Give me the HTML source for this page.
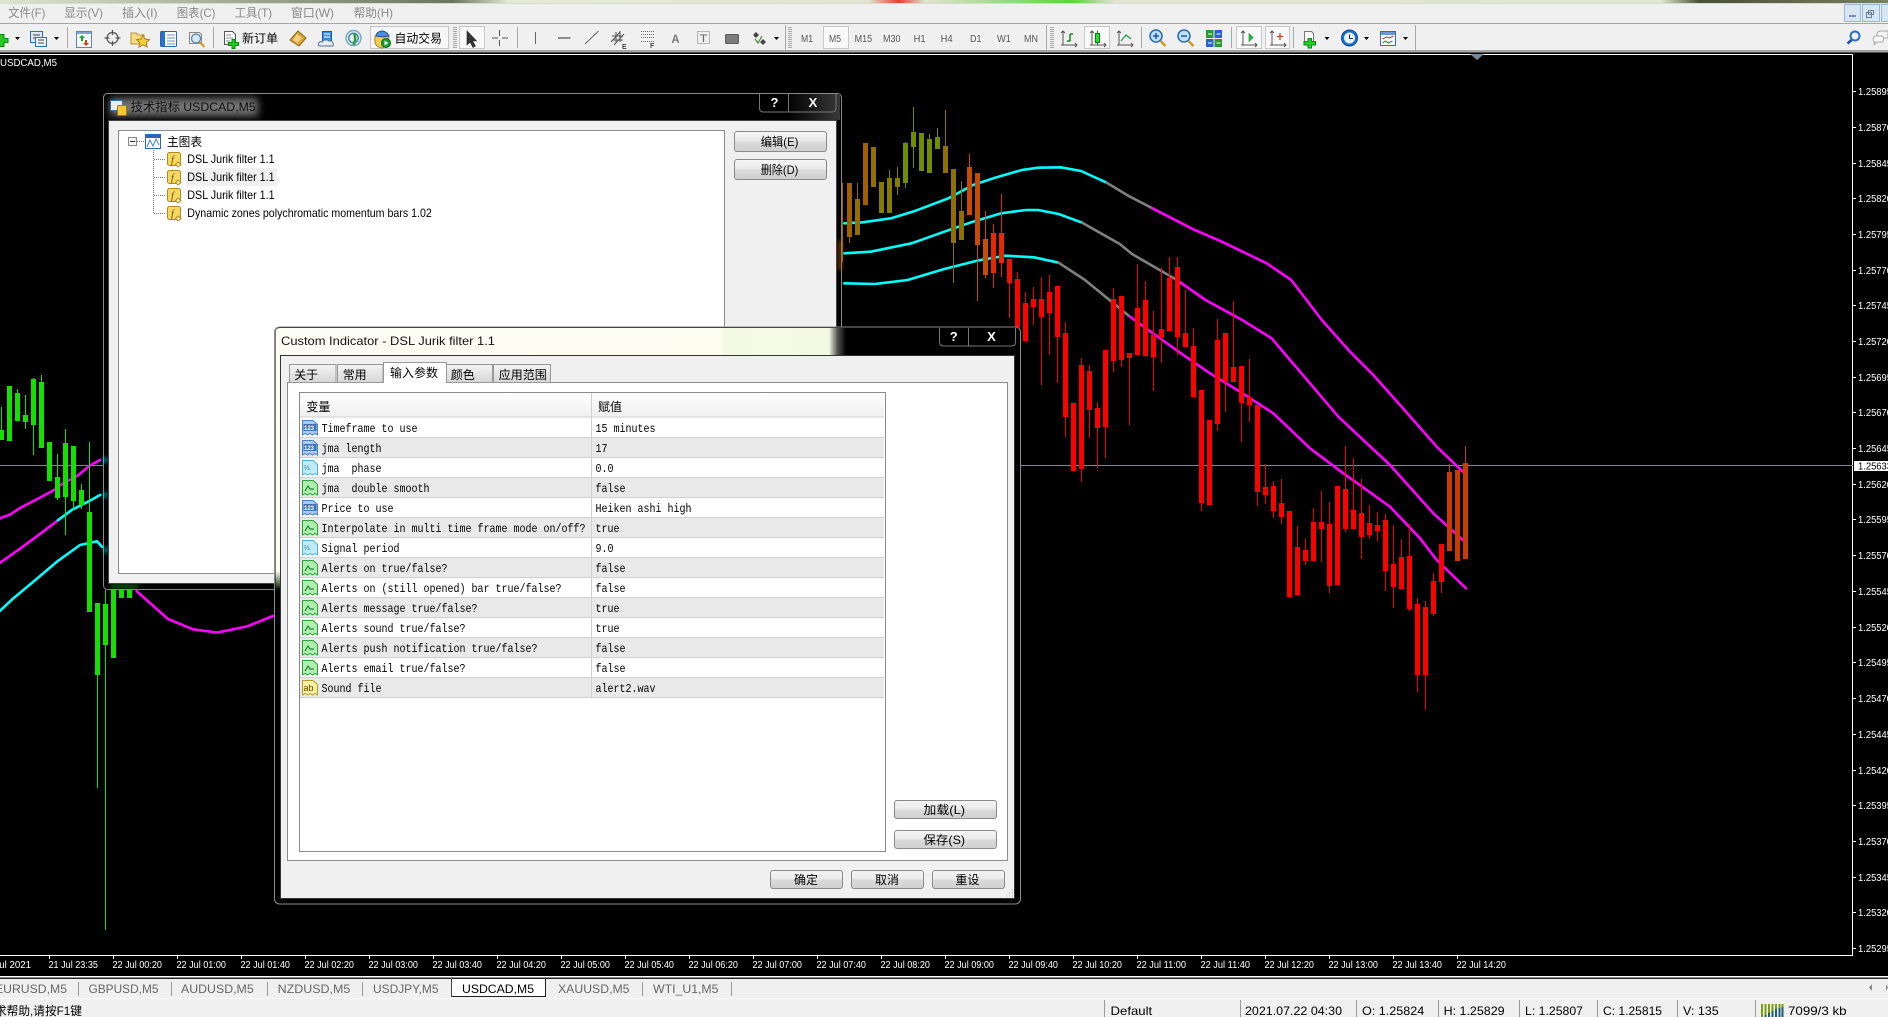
<!DOCTYPE html>
<html lang="zh"><head><meta charset="utf-8"><title>MT4 USDCAD,M5</title>
<style>
html,body{margin:0;padding:0;width:1888px;height:1017px;overflow:hidden;background:#f0f0f0}
svg{position:absolute;left:0;top:0;display:block}
text{font-family:"Liberation Sans","WenQuanYi Zen Hei","Noto Sans CJK SC",sans-serif;font-size:12px;white-space:pre}
.m{font-family:"Liberation Mono","WenQuanYi Zen Hei",monospace}
.w{fill:#fff;font-size:10px}
.tf{fill:#555;font-size:10px}
.g{fill:#888}
.t{fill:#666}
</style></head><body>
<svg width="1888" height="1017" viewBox="0 0 1888 1017" xmlns="http://www.w3.org/2000/svg">
<defs>
<linearGradient id="strip"><stop offset="0" stop-color="#dfe5d0"/><stop offset=".24" stop-color="#6a7460"/><stop offset=".27" stop-color="#e6ead8"/><stop offset=".46" stop-color="#e0e4d0"/><stop offset=".476" stop-color="#e84030"/><stop offset=".49" stop-color="#e0e4d0"/><stop offset=".568" stop-color="#60d040"/><stop offset=".59" stop-color="#e0e4d0"/><stop offset=".88" stop-color="#dfe5d0"/><stop offset=".9" stop-color="#4a4f38"/><stop offset="1" stop-color="#7a8060"/></linearGradient>
<linearGradient id="btn" x2="0" y2="1"><stop offset="0" stop-color="#f6f6f6"/><stop offset=".45" stop-color="#ebebeb"/><stop offset=".55" stop-color="#dadada"/><stop offset="1" stop-color="#cfcfcf"/></linearGradient>
<linearGradient id="tab" x2="0" y2="1"><stop offset="0" stop-color="#f4f4f4"/><stop offset="1" stop-color="#d6d6d6"/></linearGradient>
<linearGradient id="hdr" x2="0" y2="1"><stop offset="0" stop-color="#fff"/><stop offset="1" stop-color="#efefef"/></linearGradient>
<linearGradient id="t1"><stop offset="0" stop-color="#000"/><stop offset=".7" stop-color="#000"/><stop offset="1" stop-color="#383838"/></linearGradient>
<linearGradient id="t2" gradientUnits="userSpaceOnUse" x1="275" x2="846" y1="0" y2="0"><stop offset="0" stop-color="#fdfdf6"/><stop offset=".78" stop-color="#fdfdf0"/><stop offset=".785" stop-color="#f4f9e4"/><stop offset=".97" stop-color="#f4fae2"/><stop offset=".985" stop-color="#555"/><stop offset="1" stop-color="#000"/></linearGradient>
<linearGradient id="lf" x2="0" y2="1"><stop offset="0" stop-color="#fdfdf4"/><stop offset=".92" stop-color="#fafdf0"/><stop offset=".97" stop-color="#607050"/><stop offset="1" stop-color="#000"/></linearGradient>
<filter id="b4" x="-30%" y="-60%" width="160%" height="220%"><feGaussianBlur stdDeviation="4"/></filter>
<filter id="b2" x="-100%" y="-100%" width="300%" height="300%"><feGaussianBlur stdDeviation="2"/></filter>
<path id="tear" d="M.5 .5H11L15.5 4.5V15L13 13.5 10.5 15 8 13.5 5.5 15 3 13.5 .5 15Z"/>
<g id="ib"><use href="#tear" fill="#a9cdf2" stroke="#4a80c0"/><rect x="1.5" y="4" width="13" height="7" fill="#3f74b4"/></g>
<g id="il"><use href="#tear" fill="#bfeaf8" stroke="#4fb0d2"/></g>
<g id="ig"><use href="#tear" fill="#aef0ae" stroke="#2f9f3a"/><path d="M3 11L6 6 8 9 12 9" fill="none" stroke="#0f6a1f" stroke-width="1"/></g>
<g id="iy"><use href="#tear" fill="#f8f0a0" stroke="#b0a030"/></g>
<g id="fi"><rect x=".5" y=".5" width="13" height="13" rx="2" fill="#f6d860" stroke="#b08a28"/><path d="M11 10l3 2.5-3 2.5-2.5-2.5z" fill="#f8e8a0" stroke="#b08a28"/></g>
<g id="ax"><path d="M2 0V14H16M0 2L2 0 4 2M14 12L16 14 14 16M0 14H4" fill="none" stroke="#555" stroke-width="1"/></g>
<path id="dd" d="M0 0h5l-2.5 3z" fill="#000"/>
</defs>

<!-- window background -->
<rect width="1888" height="1017" fill="#f0f0f0"/>
<rect width="1888" height="3" fill="url(#strip)"/>
<rect y="3" width="1888" height="1" fill="#d8dcc8"/>

<!-- menu -->
<text class="g" x="8" y="17" textLength="37.4" lengthAdjust="spacingAndGlyphs">文件(F)</text>
<text class="g" x="64.3" y="17" textLength="38.7" lengthAdjust="spacingAndGlyphs">显示(V)</text>
<text class="g" x="122" y="17" textLength="35.5" lengthAdjust="spacingAndGlyphs">插入(I)</text>
<text class="g" x="176.8" y="17" textLength="38.6" lengthAdjust="spacingAndGlyphs">图表(C)</text>
<text class="g" x="234.6" y="17" textLength="37.4" lengthAdjust="spacingAndGlyphs">工具(T)</text>
<text class="g" x="291" y="17" textLength="43" lengthAdjust="spacingAndGlyphs">窗口(W)</text>
<text class="g" x="353.6" y="17" textLength="39.4" lengthAdjust="spacingAndGlyphs">帮助(H)</text>
<g fill="#d8e6f3" stroke="#9db8d4"><rect x="1844.5" y="4.5" width="16" height="17"/><rect x="1862.5" y="4.5" width="17" height="17"/><rect x="1881.5" y="4.5" width="10" height="17"/></g>
<rect x="1849" y="15" width="7" height="2" fill="#7a8ea4"/>
<path d="M1868.5 14.5v-4h5v4h-5M1866.5 12.5h5v5h-5z" fill="none" stroke="#6a7e94"/>
<rect y="23" width="1888" height="1" fill="#a6a6a6"/>

<!-- toolbar -->
<g stroke="#a8a8a8" fill="none"><path d="M67.5 27V48M213.5 27V48M517.5 27V48M785.5 25V50M1046.5 25V50M1141.5 27V48M1231.5 27V48M1293.5 27V48M1415.5 25V50"/></g>
<g stroke="#a8a8a8" stroke-width="4" stroke-dasharray="1 1"><path d="M455 27V48M790 27V48M1052 27V48"/></g>
<path d="M-1 34.5h5v4h4v4h-4v4h-5z" fill="#22cc22" stroke="#0a8a0a"/>
<use href="#dd" x="15" y="37"/>
<rect x="30.5" y="31.5" width="12" height="11" fill="#dfeaf8" stroke="#2a6fb8"/><rect x="35.5" y="37.5" width="11" height="9" fill="#eef4fc" stroke="#2a6fb8"/><path d="M33 35h7M33 38h2M38 40h6M38 43h6" stroke="#444"/>
<use href="#dd" x="54" y="37"/>
<rect x="76.5" y="31.5" width="15" height="16" fill="#f8fbff" stroke="#5a86b5"/><rect x="77" y="32" width="14" height="2" fill="#7fa6d0"/><path d="M82 35l3 3h-2v3h-2v-3h-2z" fill="#12b012"/><path d="M86 46l-3-3h2v-3h2v3h2z" fill="#e03a10"/>
<circle cx="112.5" cy="38" r="5.5" fill="none" stroke="#666" stroke-width="1.4"/><path d="M112.5 30v5M112.5 41v5M104.5 38h5M115.5 38h5" stroke="#555" stroke-width="1.2"/>
<path d="M131 33h5l2 2h6v9h-13z" fill="#f8dc80" stroke="#b89030"/><path d="M143 35l2 4 4.5.6-3.2 3 .8 4.4-4.1-2.2-4 2.2.8-4.4-3.2-3 4.500-.6z" fill="#f4d040" stroke="#a88020"/>
<rect x="160.5" y="31.500" width="16" height="15" rx="1" fill="#fff" stroke="#2a66b0"/><rect x="161" y="32" width="4" height="14" fill="#2a70c8"/><path d="M167 35h8M167 38h8M167 41h8M167 44h8" stroke="#6a90c0"/>
<path d="M189.500 32.500h10l2 2v9h-12z" fill="#f0f0f0" stroke="#888"/><circle cx="196" cy="38.500" r="4.500" fill="#cfe8fa" stroke="#5a7ea0" stroke-width="1.200"/><path d="M199.500 42l5 5" stroke="#d09a20" stroke-width="2"/>
<path d="M224.500 31.500h8l3 3v10h-11z" fill="#fff" stroke="#555"/><path d="M226 35h5M226 38h7M226 41h4" stroke="#888"/><path d="M232 39.500h3v3h3.500v3h-3.500v3h-3v-3h-3.500v-3h3.500z" fill="#22cc22" stroke="#0a8a0a"/>
<text x="242" y="42.500" textLength="36" lengthAdjust="spacingAndGlyphs" fill="#000">新订单</text>
<path d="M298 31l8 7-7 8-9-6z" fill="#d8a838" stroke="#8a6410"/><path d="M297 34l5 4-5 5-4-3z" fill="#f0d080"/>
<rect x="322.500" y="31.500" width="9" height="10" fill="#3a90e0" stroke="#1a5aa0"/><path d="M324 34h6M324 37h6" stroke="#fff"/><path d="M319 46c-2-3 1-5 3-4 1-2 5-3 7-1 3-1 5 2 4 5z" fill="#e6ecf2" stroke="#56708c"/>
<circle cx="353.500" cy="38" r="7.500" fill="none" stroke="#7aa8c0" stroke-width="1.500"/><circle cx="353.500" cy="38" r="4.800" fill="none" stroke="#3e8aa8" stroke-width="1.500"/><path d="M353.500 34c2 1 2.500 5 0 11" fill="none" stroke="#27a040" stroke-width="2.500"/>
<rect x="370.500" y="26.500" width="78" height="22" fill="#f7f7f7" stroke="#c6c6c6"/>
<path d="M375 36h14l-1 7c-1 3-5 5-6 5-2 0-6-2-7-5z" fill="#f0cc50" stroke="#a08020"/><path d="M376 36c0-3 3-5 6-5s6 2 7 5c-4 1-9 1-13 0z" fill="#4a8ed0" stroke="#2a5a90"/><circle cx="386" cy="43" r="4.500" fill="#12a030" stroke="#0a6a20"/><path d="M384.500 40.500l4 2.500-4 2.500z" fill="#fff"/>
<text x="394.500" y="42.500" textLength="47.500" lengthAdjust="spacingAndGlyphs" fill="#000">自动交易</text>
<rect x="459.500" y="26.500" width="25" height="22" fill="#f9f9f9" stroke="#c8c8c8"/>
<path d="M467 31V45L470 42 473 47.500 475.500 46 472.500 41H476.500Z" fill="#333" stroke="#222" stroke-width=".6"/>
<path d="M499.500 30v6M499.500 40v6M492 38h6M502 38h6" stroke="#555"/>
<path d="M535.500 32V44" stroke="#666"/><path d="M558 38h12.500" stroke="#555" stroke-width="1.300"/><path d="M585 44l13.500-13" stroke="#666"/>
<path d="M611 42l9-10M614 45l10-11M616 32v11M620 31v11M612 36l11 0M612 40l11 0" stroke="#555" fill="none"/><text x="622" y="49" style="font-size:7px;font-weight:bold" fill="#444">E</text>
<path d="M641 31.500h13M641 34.500h13M641 37.500h13M641 41.500h13" stroke="#666" stroke-dasharray="1 1"/><text x="650" y="48" style="font-size:7px;font-weight:bold" fill="#444">F</text>
<text x="671.500" y="43" textLength="8" lengthAdjust="spacingAndGlyphs" style="font-size:12px;font-weight:bold" fill="#777">A</text>
<rect x="697.500" y="31.500" width="12" height="12" fill="none" stroke="#777" stroke-dasharray="1 1"/><text x="699.500" y="42" textLength="8" lengthAdjust="spacingAndGlyphs" style="font-size:11px" fill="#666">T</text>
<rect x="725.500" y="34.500" width="13" height="9" rx="1" fill="#7c7c7c" stroke="#5a5a5a"/>
<path d="M756 32l3 3-3 3-3-3zM763 39l3 3-3 3-3-3z" fill="#444"/><path d="M755 39l3 4 4-7" fill="none" stroke="#4a8a3a" stroke-width="1.200"/>
<use href="#dd" x="774" y="37"/>
<text class="tf" x="801" y="42" textLength="12" lengthAdjust="spacingAndGlyphs">M1</text>
<rect x="823.500" y="26.500" width="25" height="22" fill="#f9f9f9" stroke="#c8c8c8"/>
<text class="tf" x="829" y="42" textLength="12" lengthAdjust="spacingAndGlyphs">M5</text>
<text class="tf" x="854.600" y="42" textLength="17.500" lengthAdjust="spacingAndGlyphs">M15</text>
<text class="tf" x="883" y="42" textLength="17.500" lengthAdjust="spacingAndGlyphs">M30</text>
<text class="tf" x="913.600" y="42" textLength="12" lengthAdjust="spacingAndGlyphs">H1</text>
<text class="tf" x="940.600" y="42" textLength="12" lengthAdjust="spacingAndGlyphs">H4</text>
<text class="tf" x="970" y="42" textLength="11.500" lengthAdjust="spacingAndGlyphs">D1</text>
<text class="tf" x="997" y="42" textLength="14" lengthAdjust="spacingAndGlyphs">W1</text>
<text class="tf" x="1024" y="42" textLength="14" lengthAdjust="spacingAndGlyphs">MN</text>
<use href="#ax" x="1061" y="31"/><path d="M1070 41V34M1070 34h3M1067 41h3" stroke="#0a8a20" stroke-width="1.500" fill="none"/>
<rect x="1084.500" y="26.500" width="25" height="22" fill="#f9f9f9" stroke="#c8c8c8"/>
<use href="#ax" x="1090" y="31"/><rect x="1095.500" y="33.500" width="4" height="9" fill="#22e022" stroke="#0a7a20"/><path d="M1097.500 30.500v3M1097.500 42.500v2" stroke="#0a7a20"/>
<use href="#ax" x="1117" y="31"/><path d="M1121 41l5-6 5 4" fill="none" stroke="#1a9a50" stroke-width="1.200"/>
<circle cx="1156" cy="36" r="6" fill="#bfe0f6" stroke="#2a6ab0" stroke-width="1.500"/><path d="M1153 36h6M1156 33v6" stroke="#1a5aa8" stroke-width="1.500"/><path d="M1160.500 41l5 5" stroke="#d09a20" stroke-width="2.500"/>
<circle cx="1184" cy="36" r="6" fill="#bfe0f6" stroke="#2a6ab0" stroke-width="1.500"/><path d="M1181 36h6" stroke="#1a5aa8" stroke-width="1.500"/><path d="M1188.500 41l5 5" stroke="#d09a20" stroke-width="2.500"/>
<rect x="1206" y="30" width="7.500" height="8" fill="#2a9a30"/><rect x="1214.500" y="30" width="7.500" height="8" fill="#2a60d0"/><rect x="1206" y="39" width="7.500" height="8" fill="#2a60d0"/><rect x="1214.500" y="39" width="7.500" height="8" fill="#2a9a30"/><path d="M1208 34h4M1216.500 34h4M1208 43h4M1216.500 43h4" stroke="#fff"/>
<rect x="1236.500" y="26.500" width="25" height="22" fill="#f9f9f9" stroke="#c8c8c8"/>
<use href="#ax" x="1241" y="31"/><path d="M1249 33.500l4 4-4 4z" fill="#22c03a" stroke="#0a8a2a" stroke-width=".6"/>
<rect x="1265.500" y="26.500" width="24" height="22" fill="#f9f9f9" stroke="#c8c8c8"/>
<use href="#ax" x="1270" y="31"/><path d="M1280 33v7M1277 36.500h6" stroke="#d03a10" stroke-width="1.200"/>
<path d="M1304.500 31.500h7l2 2v9h-9z" fill="#fff" stroke="#777"/><path d="M1308 38.500h3.500v3h4v3.500h-4v3h-3.500v-3h-4v-3.500h4z" fill="#22d022" stroke="#0a8a1a"/>
<use href="#dd" x="1324.500" y="37"/>
<circle cx="1349.500" cy="38" r="8" fill="#1a70c8" stroke="#0a4a90"/><circle cx="1349.500" cy="38" r="5.500" fill="#e8f2fa"/><path d="M1349.500 34.500V38.500H1353" stroke="#333" fill="none"/>
<use href="#dd" x="1364" y="37"/>
<rect x="1380.500" y="31.500" width="15" height="14" fill="#fff" stroke="#3a6ea8"/><rect x="1381" y="32" width="14" height="3" fill="#6a9ad0"/><path d="M1382.500 39l4-2 3 1 4-2" stroke="#c03a10" fill="none"/><path d="M1382.500 43l3-2 3 2 4-2" stroke="#1a8a30" fill="none"/>
<use href="#dd" x="1403" y="37"/>
<circle cx="1855" cy="36" r="4.500" fill="none" stroke="#2a6ec0" stroke-width="2"/><path d="M1851.500 40l-4 3.500" stroke="#1a50a0" stroke-width="2.500"/>
<path d="M1880 31h8v7h-6l-3 3v-3c-3-1-3-6 1-7z" fill="#f4f4f4" stroke="#aaa"/><path d="M1876 36c-3 0-4 5-1 6l-1 3 3-3h5c2-1 2-5 0-6z" fill="#fafafa" stroke="#aaa"/>
<rect y="50" width="1888" height="2.500" fill="#a4a4a4"/>

<!-- chart -->
<rect y="52.500" width="1888" height="923.500" fill="#000"/>
<path d="M0 54.500H1852.500V955.500H0" fill="none" stroke="#fff"/>
<path d="M1470 54h14l-7 6z" fill="#778899"/>
<text class="w" x="0" y="66" textLength="57" lengthAdjust="spacingAndGlyphs">USDCAD,M5</text>
<path d="M0 465.500H1853" stroke="#778899"/>

<!-- indicator lines -->
<g fill="none" stroke-width="2.600" stroke-linejoin="round" stroke-linecap="round">
<path stroke="#f0f" d="M0 518.300L10 514.600 20 508 40 497.600 55 489.500 62 484 78 475.400 90 465.400 100 460"/>
<path stroke="#f0f" d="M0 562.700L20 548.700 40 533.900 58 520.200"/>
<path stroke="#0ff" d="M58 520.200L72 509.800 90 500.600 100 495"/>
<path stroke="#0ff" d="M0 610.800L13 598.600 33 582 57 561.600 80 545 97 541.300 102 546.800"/>
<path stroke="#f0f" d="M136.700 591.200L168 619 193 629.300 217 632.600 247 626.400 273 616"/>
<path stroke="#0ff" d="M844.300 223.300L862.700 222.300 891.200 218.300 915.700 210.700 948.400 198.300 972.900 185 993.300 178.300 1021.800 170 1038.200 167.700 1060.600 167.300 1081 171 1106.700 182.700"/>
<path stroke="#808080" d="M1106.700 182.700L1130 196.700 1152.400 208.300"/>
<path stroke="#f0f" d="M1152.400 208.300L1193.300 229.300 1221.800 241.700 1266.700 263.300 1291.200 280 1321.800 320 1350 351.700 1373.300 375 1400 405 1436.700 446.700 1462.700 471.700"/>
<path stroke="#0ff" d="M844.300 253.300L870.800 251.700 911.600 243.300 944.300 231.700 972.900 221.700 1001.400 213.300 1025.900 210 1038.200 210 1058.600 214 1082.200 222.700"/>
<path stroke="#808080" d="M1082.200 222.700L1119.800 244 1132 254 1176.900 280"/>
<path stroke="#f0f" d="M1176.900 280L1205.500 300 1242.200 320 1271.700 338.300 1290 360 1310 383.300 1338.300 416.700 1390 465 1433.300 513.300 1462.700 540"/>
<path stroke="#0ff" d="M844.300 283.300L874.900 284 907.600 280 944.300 269 976.900 260.700 1005.500 255.700 1034 257.300 1058.600 262.700"/>
<path stroke="#808080" d="M1058.600 262.700L1085 280 1111.600 301.700 1130 316.700"/>
<path stroke="#f0f" d="M1130 316.700L1148.300 330 1180 352.700 1210 373.300 1240 391.700 1273.300 413.300 1310 448.300 1343.300 473.300 1390 506.700 1420 538.300 1436.700 560 1466 588.300"/>
</g>

<!-- candles: wicks then bodies -->
<g fill="none">
<path stroke="#14e000" d="M1.500 407V440M17.500 389V421M25.500 395V429M33.500 378V455M41.500 375V448M57.500 454V500M65.500 429V535M73.500 446V510M81.500 484V509M89.500 442V612M97.500 603V788M105.500 590V930"/>
<path stroke="#14e000" stroke-width="5" d="M1.500 430V440M9.500 386V441M17.500 393V421M25.500 415V422M33.500 379V425M41.500 382V448M49.500 442V481M57.500 477V498M65.500 443V497M73.500 446V501M81.500 490V505M89.500 512V612M97.500 603V675M105.500 604V645M113.500 585V658M121.500 585V598M129.500 585V598"/>
<path stroke="#708c00" d="M905.500 142V188M913.500 107V168M929.500 134V173M937.500 128V149"/>
<path stroke="#708c00" stroke-width="5" d="M905.500 143V183M913.500 132V147M921.500 133V171M929.500 139V173M937.500 137V149"/>
<path stroke="#857c00" d="M889.500 170V213M897.500 167V195"/>
<path stroke="#857c00" stroke-width="5" d="M881.500 182V213M889.500 178V213M897.500 178V187"/>
<path stroke="#907000" d="M857.500 183V235M945.500 110V173M953.500 169V283M961.500 181V240"/>
<path stroke="#907000" stroke-width="5" d="M857.500 199V235M873.500 147V187M945.500 146V173M953.500 169V243M961.500 211V240"/>
<path stroke="#a06000" d="M849.500 183V243M842.500 183V262"/>
<path stroke="#a06000" stroke-width="5" d="M849.500 183V237M865.500 143V205"/>
<path stroke="#c84c00" d="M969.500 154V215M977.500 173V301M985.500 211V278"/>
<path stroke="#c84c00" stroke-width="5" d="M969.500 167V215M977.500 173V245M985.500 239V275"/>
<path stroke="#e82800" d="M993.500 224V288M1001.500 194V277"/>
<path stroke="#e82800" stroke-width="5" d="M993.500 233V273M1001.500 233V263"/>
<path stroke="#f01000" d="M1009.500 259V318"/><path stroke="#f01000" stroke-width="5" d="M1009.500 259V283"/>
<path stroke="#f00000" d="M1017.500 272V327M1025.500 292V341M1033.500 287V325M1041.500 277V385M1049.500 275V355M1057.500 286V383M1065.500 322V437M1081.500 358V482M1089.500 365V438M1097.500 402V468M1105.500 350V458M1113.500 288V372M1121.500 296V367M1129.500 353V425M1137.500 264V355M1145.500 281V357M1153.500 311V391M1161.500 268V363M1169.500 257V331M1177.500 257V355M1185.500 290V347M1193.500 328V396M1201.500 390V511M1217.500 319V431M1225.500 333V412M1233.500 301V382M1241.500 366V442M1249.500 359V422M1257.500 405V506M1265.500 464V504M1273.500 481V518M1281.500 479V524M1297.500 526V595M1305.500 539V565M1313.500 508V561M1321.500 491V562M1329.500 502V593M1345.500 446V532M1353.500 458V529M1361.500 479V559M1369.500 505V539M1377.500 512V541M1385.500 514V591M1393.500 525V608M1401.500 539V589M1409.500 524V611M1417.500 598V692M1425.500 601V710M1433.500 573V616M1441.500 544V593"/>
<path stroke="#fe0000" stroke-width="5" d="M1017.500 279V327M1025.500 303V341M1033.500 299V307M1041.500 299V317M1049.500 292V313M1057.500 286V337M1065.500 333V417M1073.500 403V471M1081.500 365V469M1089.500 371V410M1097.500 408V428M1105.500 350V427M1113.500 299V361M1121.500 296V360M1129.500 353V358M1137.500 308V355M1145.500 300V356M1153.500 335V357M1161.500 329V338M1169.500 278V331M1177.500 267V337M1185.500 333V347M1193.500 346V397M1201.500 390V503M1209.500 420V505M1217.500 340V424M1225.500 333V381M1233.500 367V382M1241.500 366V403M1249.500 397V405M1257.500 405V492M1265.500 487V495M1273.500 486V511M1281.500 503V517M1289.500 511V597M1297.500 547V595M1305.500 550V561M1313.500 522V561M1321.500 522V529M1329.500 524V586M1337.500 486V585M1345.500 489V529M1353.500 510V529M1361.500 513V537M1369.500 523V535M1377.500 525V531M1385.500 520V571M1393.500 564V587M1401.500 557V589M1409.500 556V609M1417.500 604V675M1425.500 607V675M1433.500 581V614M1441.500 544V582"/>
<path stroke="#c83c00" d="M1449.500 464V551M1465.500 446V559"/>
<path stroke="#c83c00" stroke-width="5" d="M1449.500 472V551M1457.500 470V561M1465.500 463V559"/>
</g>

<!-- price axis -->
<g stroke="#fff"><path d="M1853 91.500h3M1853 127.500h3M1853 163.500h3M1853 198.500h3M1853 234.500h3M1853 270.500h3M1853 305.500h3M1853 341.500h3M1853 377.500h3M1853 412.500h3M1853 448.500h3M1853 484.500h3M1853 519.500h3M1853 555.500h3M1853 591.500h3M1853 627.500h3M1853 662.500h3M1853 698.500h3M1853 734.500h3M1853 770.500h3M1853 805.500h3M1853 841.500h3M1853 877.500h3M1853 912.500h3M1853 948.500h3"/></g>
<text class="w" x="1858" y="95" textLength="34" lengthAdjust="spacingAndGlyphs">1.25895</text>
<text class="w" x="1858" y="131" textLength="34" lengthAdjust="spacingAndGlyphs">1.25870</text>
<text class="w" x="1858" y="167" textLength="34" lengthAdjust="spacingAndGlyphs">1.25845</text>
<text class="w" x="1858" y="202" textLength="34" lengthAdjust="spacingAndGlyphs">1.25820</text>
<text class="w" x="1858" y="238" textLength="34" lengthAdjust="spacingAndGlyphs">1.25795</text>
<text class="w" x="1858" y="274" textLength="34" lengthAdjust="spacingAndGlyphs">1.25770</text>
<text class="w" x="1858" y="309" textLength="34" lengthAdjust="spacingAndGlyphs">1.25745</text>
<text class="w" x="1858" y="345" textLength="34" lengthAdjust="spacingAndGlyphs">1.25720</text>
<text class="w" x="1858" y="381" textLength="34" lengthAdjust="spacingAndGlyphs">1.25695</text>
<text class="w" x="1858" y="416" textLength="34" lengthAdjust="spacingAndGlyphs">1.25670</text>
<text class="w" x="1858" y="452" textLength="34" lengthAdjust="spacingAndGlyphs">1.25645</text>
<rect x="1854" y="461" width="34" height="10" fill="#fff"/>
<text x="1858" y="469.500" textLength="34" lengthAdjust="spacingAndGlyphs" style="font-size:10px" fill="#000">1.25633</text>
<text class="w" x="1858" y="488" textLength="34" lengthAdjust="spacingAndGlyphs">1.25620</text>
<text class="w" x="1858" y="523" textLength="34" lengthAdjust="spacingAndGlyphs">1.25595</text>
<text class="w" x="1858" y="559" textLength="34" lengthAdjust="spacingAndGlyphs">1.25570</text>
<text class="w" x="1858" y="595" textLength="34" lengthAdjust="spacingAndGlyphs">1.25545</text>
<text class="w" x="1858" y="631" textLength="34" lengthAdjust="spacingAndGlyphs">1.25520</text>
<text class="w" x="1858" y="666" textLength="34" lengthAdjust="spacingAndGlyphs">1.25495</text>
<text class="w" x="1858" y="702" textLength="34" lengthAdjust="spacingAndGlyphs">1.25470</text>
<text class="w" x="1858" y="738" textLength="34" lengthAdjust="spacingAndGlyphs">1.25445</text>
<text class="w" x="1858" y="774" textLength="34" lengthAdjust="spacingAndGlyphs">1.25420</text>
<text class="w" x="1858" y="809" textLength="34" lengthAdjust="spacingAndGlyphs">1.25395</text>
<text class="w" x="1858" y="845" textLength="34" lengthAdjust="spacingAndGlyphs">1.25370</text>
<text class="w" x="1858" y="881" textLength="34" lengthAdjust="spacingAndGlyphs">1.25345</text>
<text class="w" x="1858" y="916" textLength="34" lengthAdjust="spacingAndGlyphs">1.25320</text>
<text class="w" x="1858" y="952" textLength="34" lengthAdjust="spacingAndGlyphs">1.25295</text>

<!-- time axis -->
<path stroke="#fff" d="M49.500 956v3M113.500 956v3M177.500 956v3M241.500 956v3M305.500 956v3M369.500 956v3M433.500 956v3M497.500 956v3M561.500 956v3M625.500 956v3M689.500 956v3M753.500 956v3M817.500 956v3M881.500 956v3M945.500 956v3M1009.500 956v3M1073.500 956v3M1137.500 956v3M1201.500 956v3M1265.500 956v3M1329.500 956v3M1393.500 956v3M1457.500 956v3"/>
<text class="w" x="-19" y="968" textLength="50" lengthAdjust="spacingAndGlyphs">21 Jul 2021</text>
<text class="w" x="48.500" y="968" textLength="49.500" lengthAdjust="spacingAndGlyphs">21 Jul 23:35</text>
<text class="w" x="112.500" y="968" textLength="49.500" lengthAdjust="spacingAndGlyphs">22 Jul 00:20</text>
<text class="w" x="176.500" y="968" textLength="49.500" lengthAdjust="spacingAndGlyphs">22 Jul 01:00</text>
<text class="w" x="240.500" y="968" textLength="49.500" lengthAdjust="spacingAndGlyphs">22 Jul 01:40</text>
<text class="w" x="304.500" y="968" textLength="49.500" lengthAdjust="spacingAndGlyphs">22 Jul 02:20</text>
<text class="w" x="368.500" y="968" textLength="49.500" lengthAdjust="spacingAndGlyphs">22 Jul 03:00</text>
<text class="w" x="432.500" y="968" textLength="49.500" lengthAdjust="spacingAndGlyphs">22 Jul 03:40</text>
<text class="w" x="496.500" y="968" textLength="49.500" lengthAdjust="spacingAndGlyphs">22 Jul 04:20</text>
<text class="w" x="560.500" y="968" textLength="49.500" lengthAdjust="spacingAndGlyphs">22 Jul 05:00</text>
<text class="w" x="624.500" y="968" textLength="49.500" lengthAdjust="spacingAndGlyphs">22 Jul 05:40</text>
<text class="w" x="688.500" y="968" textLength="49.500" lengthAdjust="spacingAndGlyphs">22 Jul 06:20</text>
<text class="w" x="752.500" y="968" textLength="49.500" lengthAdjust="spacingAndGlyphs">22 Jul 07:00</text>
<text class="w" x="816.500" y="968" textLength="49.500" lengthAdjust="spacingAndGlyphs">22 Jul 07:40</text>
<text class="w" x="880.500" y="968" textLength="49.500" lengthAdjust="spacingAndGlyphs">22 Jul 08:20</text>
<text class="w" x="944.500" y="968" textLength="49.500" lengthAdjust="spacingAndGlyphs">22 Jul 09:00</text>
<text class="w" x="1008.500" y="968" textLength="49.500" lengthAdjust="spacingAndGlyphs">22 Jul 09:40</text>
<text class="w" x="1072.500" y="968" textLength="49.500" lengthAdjust="spacingAndGlyphs">22 Jul 10:20</text>
<text class="w" x="1136.500" y="968" textLength="49.500" lengthAdjust="spacingAndGlyphs">22 Jul 11:00</text>
<text class="w" x="1200.500" y="968" textLength="49.500" lengthAdjust="spacingAndGlyphs">22 Jul 11:40</text>
<text class="w" x="1264.500" y="968" textLength="49.500" lengthAdjust="spacingAndGlyphs">22 Jul 12:20</text>
<text class="w" x="1328.500" y="968" textLength="49.500" lengthAdjust="spacingAndGlyphs">22 Jul 13:00</text>
<text class="w" x="1392.500" y="968" textLength="49.500" lengthAdjust="spacingAndGlyphs">22 Jul 13:40</text>
<text class="w" x="1456.500" y="968" textLength="49.500" lengthAdjust="spacingAndGlyphs">22 Jul 14:20</text>

<!-- bottom tabs / status -->
<rect y="976" width="1888" height="1.500" fill="#fff"/>
<rect y="977.500" width="1888" height="1.500" fill="#222"/>
<rect y="979" width="1888" height="19" fill="#f0f0f0"/>
<rect y="998" width="1888" height="1" fill="#fafafa"/>
<path stroke="#999" d="M78.500 982V996M171.500 982V996M267.500 982V996M362.500 982V996M642.500 982V996M731.500 982V996"/>
<text class="t" x="-5" y="993" textLength="72" lengthAdjust="spacingAndGlyphs">EURUSD,M5</text>
<text class="t" x="88.500" y="993" textLength="70" lengthAdjust="spacingAndGlyphs">GBPUSD,M5</text>
<text class="t" x="181" y="993" textLength="72.700" lengthAdjust="spacingAndGlyphs">AUDUSD,M5</text>
<text class="t" x="277.600" y="993" textLength="72.700" lengthAdjust="spacingAndGlyphs">NZDUSD,M5</text>
<text class="t" x="373" y="993" textLength="65.500" lengthAdjust="spacingAndGlyphs">USDJPY,M5</text>
<rect x="451" y="978" width="95" height="19" fill="#fff"/><path d="M451 978.500H545.500V996.500H451" fill="none" stroke="#222"/><path d="M451.500 978v19" stroke="#444"/>
<text x="462" y="993" textLength="72" lengthAdjust="spacingAndGlyphs" fill="#000">USDCAD,M5</text>
<text class="t" x="558" y="993" textLength="71.500" lengthAdjust="spacingAndGlyphs">XAUUSD,M5</text>
<text class="t" x="653" y="993" textLength="65.500" lengthAdjust="spacingAndGlyphs">WTI_U1,M5</text>
<path d="M1872 984l-3 3.500 3 3.500z" fill="#888"/><path d="M1886 984l2 3.500-2 3.500z" fill="#888"/>
<path stroke="#999" d="M1104.500 1000V1017M1240.500 1000V1017M1356.500 1000V1017M1438.500 1000V1017M1519.500 1000V1017M1597.500 1000V1017M1677.500 1000V1017M1755.500 1000V1017"/>
<text x="-5" y="1015" textLength="87" lengthAdjust="spacingAndGlyphs" fill="#000">求帮助,请按F1键</text>
<text x="1110.500" y="1015" textLength="41.700" lengthAdjust="spacingAndGlyphs" fill="#000">Default</text>
<text x="1245" y="1015" textLength="97" lengthAdjust="spacingAndGlyphs" fill="#000">2021.07.22 04:30</text>
<text x="1362" y="1015" textLength="62.300" lengthAdjust="spacingAndGlyphs" fill="#000">O: 1.25824</text>
<text x="1443.600" y="1015" textLength="61" lengthAdjust="spacingAndGlyphs" fill="#000">H: 1.25829</text>
<text x="1525" y="1015" textLength="58" lengthAdjust="spacingAndGlyphs" fill="#000">L: 1.25807</text>
<text x="1603" y="1015" textLength="59" lengthAdjust="spacingAndGlyphs" fill="#000">C: 1.25815</text>
<text x="1683" y="1015" textLength="35.700" lengthAdjust="spacingAndGlyphs" fill="#000">V: 135</text>
<g stroke-width="2"><path stroke="#7a9a20" d="M1762 1004v13M1765.500 1004v11M1769 1004v9M1772.500 1004v7M1776 1004v5M1779.500 1004v4M1782.500 1004v3"/><path stroke="#1f5a80" d="M1765.500 1015v2M1769 1013v4M1772.500 1011v6M1776 1009v8M1779.500 1008v9M1782.500 1007v10"/></g>
<text x="1788" y="1015" textLength="58.600" lengthAdjust="spacingAndGlyphs" fill="#000">7099/3 kb</text>

<!-- dialog 1 -->
<rect x="103.500" y="93.500" width="738" height="496" rx="4" fill="#000" stroke="#8a8a8a"/>
<rect x="660" y="94" width="180" height="26" fill="url(#t1)"/>
<g filter="url(#b2)" opacity=".55"><circle cx="105" cy="460" r="3" fill="#0ff"/><circle cx="105" cy="495" r="3" fill="#0ff"/><circle cx="106" cy="550" r="3" fill="#0ff"/><rect x="110" y="585" width="28" height="3" fill="#14e000"/><rect x="838" y="240" width="4" height="30" fill="#c06000"/></g>
<rect x="110" y="98" width="148" height="18" fill="#fff" opacity=".45" filter="url(#b4)"/>
<rect x="110.500" y="100.500" width="12" height="10" fill="#e4eefa" stroke="#3a6ea8"/><rect x="117.500" y="105.500" width="9" height="10" rx="1" fill="#f0c838" stroke="#a07a10"/>
<text x="130.700" y="111" textLength="125" lengthAdjust="spacingAndGlyphs" fill="#111">技术指标 USDCAD,M5</text>
<path d="M759.500 94V108Q759.500 112 763.500 112H832Q836 112 836 108V94M788.500 94V112" fill="none" stroke="#777"/>
<text x="774.500" y="107" text-anchor="middle" style="font-size:13px;font-weight:bold" fill="#fff">?</text>
<text x="813" y="107" text-anchor="middle" style="font-size:13px;font-weight:bold" fill="#fff">X</text>
<rect x="108.500" y="120.500" width="728" height="463" fill="#f0f0f0" stroke="#444"/>
<rect x="118.500" y="130.500" width="606" height="443" fill="#fff" stroke="#8a8a8a"/>
<rect x="128.500" y="137.500" width="8" height="8" fill="#f4f4f4" stroke="#888"/><path d="M130 141.500h5" stroke="#333"/>
<path d="M137 141.500h8M153.500 150V213M154 159.500h12M154 177.500h12M154 195.500h12M154 213.500h12" stroke="#777" stroke-dasharray="1 1" fill="none"/>
<rect x="145.500" y="134.500" width="15" height="14" fill="#fff" stroke="#2a66c0"/><rect x="146" y="135" width="14" height="3" fill="#2a66c0"/><path d="M147 147l3-7 3 6 3-7 3 6" fill="none" stroke="#3a90d8"/>
<text x="167" y="146" textLength="35" lengthAdjust="spacingAndGlyphs" fill="#000">主图表</text>
<use href="#fi" x="167" y="152"/><text x="171" y="163" style="font-size:10px;font-style:italic;font-family:'Liberation Serif',serif" fill="#6a4a00">f</text>
<rect x="186" y="168" width="91" height="18" fill="#f0f0f0"/>
<use href="#fi" x="167" y="170"/><text x="171" y="181" style="font-size:10px;font-style:italic;font-family:'Liberation Serif',serif" fill="#6a4a00">f</text>
<use href="#fi" x="167" y="188"/><text x="171" y="199" style="font-size:10px;font-style:italic;font-family:'Liberation Serif',serif" fill="#6a4a00">f</text>
<use href="#fi" x="167" y="206"/><text x="171" y="217" style="font-size:10px;font-style:italic;font-family:'Liberation Serif',serif" fill="#6a4a00">f</text>
<text x="187.300" y="163" textLength="87.300" lengthAdjust="spacingAndGlyphs" fill="#000">DSL Jurik filter 1.1</text>
<text x="187.300" y="181" textLength="87.300" lengthAdjust="spacingAndGlyphs" fill="#000">DSL Jurik filter 1.1</text>
<text x="187.300" y="199" textLength="87.300" lengthAdjust="spacingAndGlyphs" fill="#000">DSL Jurik filter 1.1</text>
<text x="187.300" y="217" textLength="244.500" lengthAdjust="spacingAndGlyphs" fill="#000">Dynamic zones polychromatic momentum bars 1.02</text>
<rect x="734.500" y="131.500" width="92" height="20" rx="2.500" fill="url(#btn)" stroke="#8a8a8a"/>
<text x="760.700" y="146" textLength="37.700" lengthAdjust="spacingAndGlyphs" fill="#000">编辑(E)</text>
<rect x="734.500" y="159.500" width="92" height="20" rx="2.500" fill="url(#btn)" stroke="#8a8a8a"/>
<text x="760.700" y="174" textLength="37.700" lengthAdjust="spacingAndGlyphs" fill="#000">删除(D)</text>

<!-- dialog 2 -->
<rect x="274.500" y="327" width="746" height="577" rx="5" fill="#000" stroke="#8a8a8a"/>
<path d="M280 328H846V355H280V584H275.500V332Q275.500 328 280 328Z" fill="url(#t2)"/>
<rect x="275.500" y="355" width="4.500" height="235" fill="url(#lf)"/>
<text x="281" y="345" textLength="214" lengthAdjust="spacingAndGlyphs" fill="#111">Custom Indicator - DSL Jurik filter 1.1</text>
<path d="M939.500 328V342Q939.500 346 943.500 346H1011.500Q1015.500 346 1015.500 342V328M968.500 328V346" fill="none" stroke="#777"/>
<text x="953.700" y="341" text-anchor="middle" style="font-size:13px;font-weight:bold" fill="#fff">?</text>
<text x="991.500" y="341" text-anchor="middle" style="font-size:13px;font-weight:bold" fill="#fff">X</text>
<rect x="280.500" y="355.500" width="734" height="543" fill="#f0f0f0" stroke="#333"/>
<rect x="287.500" y="382.500" width="720" height="478" fill="#fff" stroke="#8a8a8a"/>
<rect x="289.500" y="364.500" width="46.500" height="18" fill="url(#tab)" stroke="#999"/>
<rect x="337.500" y="364.500" width="45.500" height="18" fill="url(#tab)" stroke="#999"/>
<rect x="446.500" y="364.500" width="46" height="18" fill="url(#tab)" stroke="#999"/>
<rect x="493.500" y="364.500" width="57" height="18" fill="url(#tab)" stroke="#999"/>
<path d="M383.500 383V362.500H446.500V383" fill="#fff" stroke="#999"/>
<text x="294.200" y="379" textLength="24" lengthAdjust="spacingAndGlyphs" fill="#000">关于</text>
<text x="342.700" y="379" textLength="24" lengthAdjust="spacingAndGlyphs" fill="#000">常用</text>
<text x="390" y="377" textLength="48" lengthAdjust="spacingAndGlyphs" fill="#000">输入参数</text>
<text x="450.800" y="379" textLength="24" lengthAdjust="spacingAndGlyphs" fill="#000">颜色</text>
<text x="498.800" y="379" textLength="48" lengthAdjust="spacingAndGlyphs" fill="#000">应用范围</text>

<!-- grid -->
<rect x="299.500" y="392.500" width="586" height="459" fill="#fff" stroke="#8a8a8a"/>
<rect x="300" y="393" width="584" height="24" fill="url(#hdr)"/>
<g fill="#e9e9e9"><rect x="300" y="437" width="584" height="20"/><rect x="300" y="477" width="584" height="20"/><rect x="300" y="517" width="584" height="20"/><rect x="300" y="557" width="584" height="20"/><rect x="300" y="597" width="584" height="20"/><rect x="300" y="637" width="584" height="20"/><rect x="300" y="677" width="584" height="20"/></g>
<path stroke="#d0d0d0" d="M300 417H884M300 437.500H884M300 457.500H884M300 477.500H884M300 497.500H884M300 517.500H884M300 537.500H884M300 557.500H884M300 577.500H884M300 597.500H884M300 617.500H884M300 637.500H884M300 657.500H884M300 677.500H884M300 697.500H884M591.500 393V697.500"/>
<text x="306.400" y="411" textLength="24" lengthAdjust="spacingAndGlyphs" fill="#000">变量</text>
<text x="598" y="411" textLength="24" lengthAdjust="spacingAndGlyphs" fill="#000">赋值</text>
<use href="#ib" x="302" y="420"/><text x="304" y="430" style="font-size:6px;font-weight:bold" fill="#fff">123</text>
<use href="#ib" x="302" y="440"/><text x="304" y="450" style="font-size:6px;font-weight:bold" fill="#fff">123</text>
<use href="#il" x="302" y="460"/><text x="304" y="470" style="font-size:7px" fill="#2a7a9a">½</text>
<use href="#ig" x="302" y="480"/>
<use href="#ib" x="302" y="500"/><text x="304" y="510" style="font-size:6px;font-weight:bold" fill="#fff">123</text>
<use href="#ig" x="302" y="520"/>
<use href="#il" x="302" y="540"/><text x="304" y="550" style="font-size:7px" fill="#2a7a9a">½</text>
<use href="#ig" x="302" y="560"/><use href="#ig" x="302" y="580"/><use href="#ig" x="302" y="600"/><use href="#ig" x="302" y="620"/><use href="#ig" x="302" y="640"/><use href="#ig" x="302" y="660"/>
<use href="#iy" x="302" y="680"/><text x="303.500" y="691" style="font-size:9px" fill="#5a4a00">ab</text>
<g fill="#000">
<text class="m" x="321.500" y="432" textLength="96" lengthAdjust="spacingAndGlyphs">Timeframe to use</text><text class="m" x="595.500" y="432" textLength="60" lengthAdjust="spacingAndGlyphs">15 minutes</text>
<text class="m" x="321.500" y="452" textLength="60" lengthAdjust="spacingAndGlyphs">jma length</text><text class="m" x="595.500" y="452" textLength="12" lengthAdjust="spacingAndGlyphs">17</text>
<text class="m" x="321.500" y="472" textLength="60" lengthAdjust="spacingAndGlyphs">jma  phase</text><text class="m" x="595.500" y="472" textLength="18" lengthAdjust="spacingAndGlyphs">0.0</text>
<text class="m" x="321.500" y="492" textLength="108" lengthAdjust="spacingAndGlyphs">jma  double smooth</text><text class="m" x="595.500" y="492" textLength="30" lengthAdjust="spacingAndGlyphs">false</text>
<text class="m" x="321.500" y="512" textLength="72" lengthAdjust="spacingAndGlyphs">Price to use</text><text class="m" x="595.500" y="512" textLength="96" lengthAdjust="spacingAndGlyphs">Heiken ashi high</text>
<text class="m" x="321.500" y="532" textLength="264" lengthAdjust="spacingAndGlyphs">Interpolate in multi time frame mode on/off?</text><text class="m" x="595.500" y="532" textLength="24" lengthAdjust="spacingAndGlyphs">true</text>
<text class="m" x="321.500" y="552" textLength="78" lengthAdjust="spacingAndGlyphs">Signal period</text><text class="m" x="595.500" y="552" textLength="18" lengthAdjust="spacingAndGlyphs">9.0</text>
<text class="m" x="321.500" y="572" textLength="126" lengthAdjust="spacingAndGlyphs">Alerts on true/false?</text><text class="m" x="595.500" y="572" textLength="30" lengthAdjust="spacingAndGlyphs">false</text>
<text class="m" x="321.500" y="592" textLength="240" lengthAdjust="spacingAndGlyphs">Alerts on (still opened) bar true/false?</text><text class="m" x="595.500" y="592" textLength="30" lengthAdjust="spacingAndGlyphs">false</text>
<text class="m" x="321.500" y="612" textLength="156" lengthAdjust="spacingAndGlyphs">Alerts message true/false?</text><text class="m" x="595.500" y="612" textLength="24" lengthAdjust="spacingAndGlyphs">true</text>
<text class="m" x="321.500" y="632" textLength="144" lengthAdjust="spacingAndGlyphs">Alerts sound true/false?</text><text class="m" x="595.500" y="632" textLength="24" lengthAdjust="spacingAndGlyphs">true</text>
<text class="m" x="321.500" y="652" textLength="216" lengthAdjust="spacingAndGlyphs">Alerts push notification true/false?</text><text class="m" x="595.500" y="652" textLength="30" lengthAdjust="spacingAndGlyphs">false</text>
<text class="m" x="321.500" y="672" textLength="144" lengthAdjust="spacingAndGlyphs">Alerts email true/false?</text><text class="m" x="595.500" y="672" textLength="30" lengthAdjust="spacingAndGlyphs">false</text>
<text class="m" x="321.500" y="692" textLength="60" lengthAdjust="spacingAndGlyphs">Sound file</text><text class="m" x="595.500" y="692" textLength="60" lengthAdjust="spacingAndGlyphs">alert2.wav</text>
</g>

<!-- buttons -->
<rect x="894.500" y="800.500" width="102" height="18" rx="2.500" fill="url(#btn)" stroke="#8a8a8a"/>
<text x="923.400" y="814" textLength="41.700" lengthAdjust="spacingAndGlyphs" fill="#000">加载(L)</text>
<rect x="894.500" y="830.500" width="102" height="18" rx="2.500" fill="url(#btn)" stroke="#8a8a8a"/>
<text x="923.400" y="844" textLength="41.700" lengthAdjust="spacingAndGlyphs" fill="#000">保存(S)</text>
<rect x="770.500" y="870.500" width="72" height="18" rx="2.500" fill="url(#btn)" stroke="#8a8a8a"/>
<text x="794" y="884" textLength="24" lengthAdjust="spacingAndGlyphs" fill="#000">确定</text>
<rect x="851.500" y="870.500" width="72" height="18" rx="2.500" fill="url(#btn)" stroke="#8a8a8a"/>
<text x="875" y="884" textLength="24" lengthAdjust="spacingAndGlyphs" fill="#000">取消</text>
<rect x="932.500" y="870.500" width="72" height="18" rx="2.500" fill="url(#btn)" stroke="#8a8a8a"/>
<text x="955.400" y="884" textLength="24" lengthAdjust="spacingAndGlyphs" fill="#000">重设</text>
<path d="M1012 896h1M1009 896h1M1012 893h1M1006 896h1M1009 893h1M1012 890h1" stroke="#aaa"/>
</svg>
</body></html>
